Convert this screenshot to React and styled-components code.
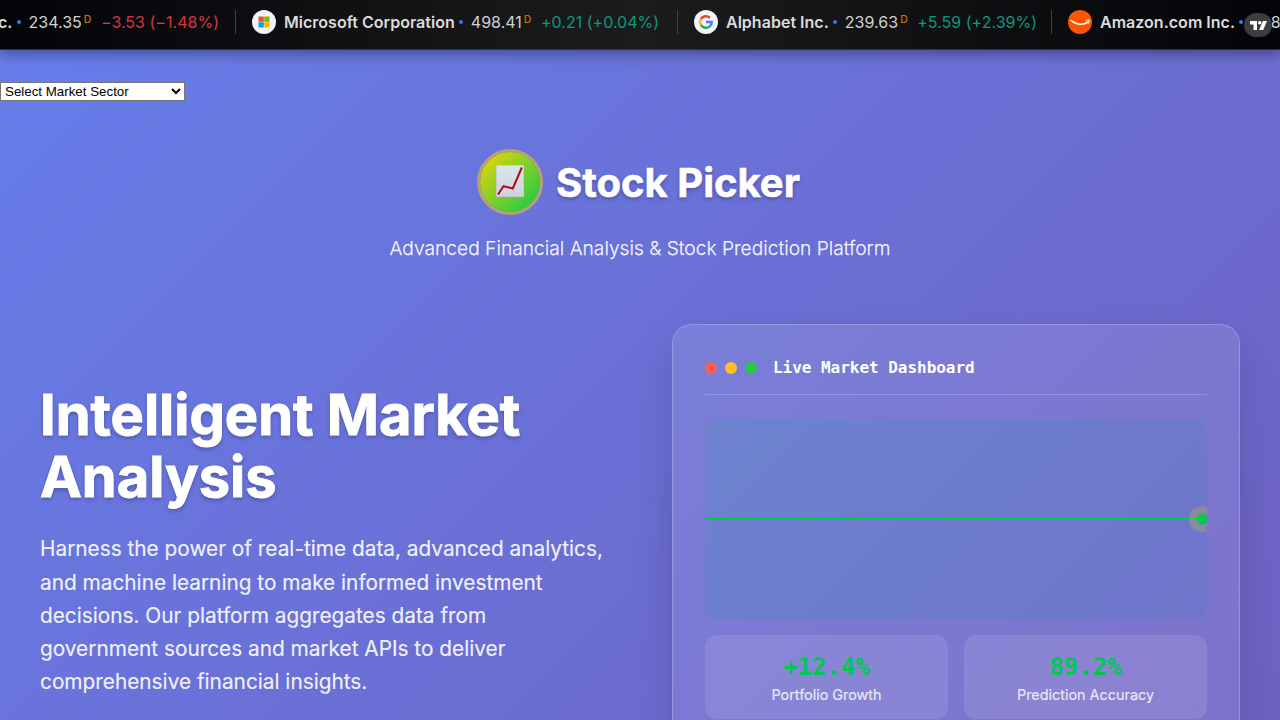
import React from "react";
import styled, { createGlobalStyle } from "styled-components";

const Global = createGlobalStyle`
  *, *::before, *::after { box-sizing: border-box; }
  html, body { margin: 0; padding: 0; }
  body { font-family: Inter, "Liberation Sans", sans-serif; color: #fff; overflow: hidden; }
`;

const Page = styled.div`
  height: 100vh;
  overflow: hidden;
  display: flex;
  flex-direction: column;
  background: linear-gradient(135deg, #667eea 0%, #764ba2 180%);
`;

const TickerBar = styled.div`
  position: relative;
  flex: 0 0 50px;
  display: flex;
  align-items: flex-start;
  background: linear-gradient(90deg, #030408 0%, #1c1c1d 50%, #030408 100%);
  border-bottom: 1px solid #333337;
  box-shadow: 0 4px 12px rgba(0, 0, 0, 0.35);
`;

const TickerTrack = styled.div`
  display: flex;
  width: 100%;
  height: 44px;
  overflow: hidden;
`;

const TickerItem = styled.div`
  position: relative;
  flex: 0 0 ${(p) => p.$width}px;
  min-width: 0;
  display: flex;
  align-items: center;
  justify-content: ${(p) => (p.$end ? "flex-end" : "flex-start")};
  padding: 0 17px 0 ${(p) => (p.$end ? 0 : 16)}px;
  white-space: nowrap;
  font-size: 16px;
  line-height: 24px;
  letter-spacing: 0.02px;
  color: #d1d1d1;
  &::after {
    content: "";
    position: absolute;
    right: 0;
    top: 10px;
    width: 1px;
    height: 24px;
    background: #434346;
  }
`;

const Logo = styled.svg`
  flex: none;
  width: 24px;
  height: 24px;
  margin-right: 8px;
`;

const Name = styled.span`
  font-weight: 600;
  color: #dbdbdb;
`;

const Dot = styled.span`
  flex: none;
  width: 4px;
  height: 4px;
  margin: 0 8px 0 4px;
  border-radius: 50%;
  background: #2e7bf6;
`;

const Delay = styled.span`
  align-self: flex-start;
  margin: 14px 9.5px 0 2px;
  font-size: 10.5px;
  line-height: 12px;
  font-weight: 500;
  color: #c87500;
`;

const Change = styled.span`
  color: ${(p) => (p.$down ? "#dc3340" : "#089981")};
`;

const TvBadge = styled.div`
  position: absolute;
  top: 13px;
  right: 8px;
  width: 28px;
  height: 24px;
  border-radius: 12px;
  background: #3d3d3d;
  display: flex;
  align-items: center;
  justify-content: center;
`;

const Sector = styled.select`
  align-self: flex-start;
  width: 185px;
  height: 19px;
  margin: 32px 0 0;
  padding: 0;
  font: 13.333px "Liberation Sans", Arial, sans-serif;
  color: #000;
  background: #fff;
  border: 1px solid #767676;
  border-radius: 0;
`;

const Header = styled.header`
  display: flex;
  flex-direction: column;
  align-items: center;
  margin-top: 48px;
`;

const Brand = styled.div`
  display: flex;
  align-items: center;
  gap: 13px;
  height: 66px;
  margin-right: 3px;
`;

const BrandMark = styled.div`
  width: 66px;
  height: 66px;
  padding-bottom: 2px;
  border-radius: 50%;
  border: 3px solid #b6a26e;
  background: linear-gradient(135deg, #ffd700 0%, #00c853 100%) border-box;
  background-clip: padding-box;
  display: flex;
  align-items: center;
  justify-content: center;
`;

const BrandName = styled.div`
  padding-top: 1px;
  font-size: 40px;
  line-height: 64px;
  font-weight: 700;
  -webkit-text-stroke: 0.6px #fff;
  text-shadow: 0 2px 4px rgba(0, 0, 0, 0.3);
`;

const Tagline = styled.p`
  margin: 18px 0 0;
  font-size: 19.2px;
  line-height: 31px;
  font-weight: 300;
  color: rgba(255, 255, 255, 0.9);
  -webkit-text-stroke: 0.25px rgba(255, 255, 255, 0.9);
`;

const Hero = styled.main`
  display: grid;
  grid-template-columns: 568px 568px;
  column-gap: 64px;
  align-items: start;
  padding: 0 40px;
  margin-top: 60px;
`;

const Copy = styled.section`
  padding-top: 61px;
`;

const Headline = styled.h1`
  margin: 0;
  font-size: 56px;
  line-height: 61.6px;
  font-weight: 700;
  -webkit-text-stroke: 1px #fff;
  text-shadow: 0 2px 4px rgba(0, 0, 0, 0.3);
`;

const Lead = styled.p`
  margin: 24.15px 0 0;
  font-size: 20.8px;
  line-height: 33.28px;
  color: rgba(255, 255, 255, 0.9);
  -webkit-text-stroke: 0.2px rgba(255, 255, 255, 0.9);
`;

const Card = styled.section`
  height: 460px;
  padding: 32px;
  border: 1px solid rgba(255, 255, 255, 0.2);
  border-radius: 20px;
  background: rgba(255, 255, 255, 0.105);
  box-shadow: 0 20px 40px rgba(0, 0, 0, 0.15);
`;

const CardHead = styled.div`
  display: flex;
  align-items: center;
  gap: 8px;
  height: 38px;
  padding-bottom: 16px;
  border-bottom: 1px solid rgba(255, 255, 255, 0.2);
`;

const Light = styled.span`
  width: 12px;
  height: 12px;
  border-radius: 50%;
  background: ${(p) => p.$color};
`;

const CardTitle = styled.span`
  margin-left: 8px;
  font: bold 16px/22px "DejaVu Sans Mono", "Liberation Mono", monospace;
  letter-spacing: -0.03px;
`;

const Chart = styled.div`
  height: 200px;
  margin-top: 24px;
  border-radius: 12px;
  overflow: hidden;
  background: linear-gradient(135deg, rgba(0, 180, 130, 0.11), rgba(0, 120, 190, 0.12));
`;

const ChartSvg = styled.svg`
  display: block;
  width: 100%;
  height: 100%;
`;

const Metrics = styled.div`
  display: grid;
  grid-template-columns: 1fr 1fr;
  gap: 16px;
  margin-top: 16px;
`;

const Metric = styled.div`
  height: 84px;
  padding-top: 16px;
  border-radius: 12px;
  background: rgba(255, 255, 255, 0.1);
  text-align: center;
`;

const MetricValue = styled.div`
  font: bold 24px/32px "DejaVu Sans Mono", "Liberation Mono", monospace;
  color: #00c853;
`;

const MetricLabel = styled.div`
  font-size: 14.4px;
  line-height: 23px;
  color: rgba(255, 255, 255, 0.8);
  -webkit-text-stroke: 0.2px rgba(255, 255, 255, 0.8);
`;

const MicrosoftLogo = () => (
  <Logo viewBox="0 0 24 24">
    <circle cx="12" cy="12" r="12" fill="#f0f3fa" />
    <path fill="#f25022" d="M6.5 6.5h5.3v5.3H6.5z" />
    <path fill="#7fba00" d="M12.2 6.5h5.3v5.3h-5.3z" />
    <path fill="#00a4ef" d="M6.5 12.2h5.3v5.3H6.5z" />
    <path fill="#ffb900" d="M12.2 12.2h5.3v5.3h-5.3z" />
  </Logo>
);

const GoogleLogo = () => (
  <Logo viewBox="0 0 24 24">
    <circle cx="12" cy="12" r="12" fill="#f0f3fa" />
    <g fill="none" strokeWidth="2.5">
      <path stroke="#ea4335" d="M6.9 9.1A5.8 5.8 0 0 1 16 7.8" />
      <path stroke="#fbbc05" d="M6.9 14.8a5.8 5.8 0 0 1 0-5.7" />
      <path stroke="#34a853" d="M15.8 16.4a5.8 5.8 0 0 1-8.9-1.6" />
      <path stroke="#4285f4" d="M12 12.1h5.7a5.8 5.8 0 0 1-1.9 4.3" />
    </g>
  </Logo>
);

const AmazonLogo = () => (
  <Logo viewBox="0 0 24 24">
    <circle cx="12" cy="12" r="12" fill="#ff5400" />
    <path fill="none" stroke="#fff" strokeWidth="1.5" strokeLinecap="round" d="M3.2 10.5c5 4.7 12.3 4.7 17 1.3" />
    <path
      fill="none"
      stroke="#fff"
      strokeWidth="1.1"
      strokeLinecap="round"
      strokeLinejoin="round"
      d="M17.900 10.300c1.300-.6 2.700-.6 3.100-.2s0 2-.8 3"
    />
  </Logo>
);

const TradingViewMark = () => (
  <svg width="17" height="9" viewBox="0 0 17 9" fill="#fff">
    <path d="M0 0h7v9H3.500V3.500H0z" />
    <circle cx="9.700" cy="1.750" r="1.750" />
    <path d="M12.900 0H17l-3.800 9H9.200z" />
  </svg>
);

const ChartEmoji = () => (
  <svg width="28" height="32" viewBox="0 0 28 32">
    <defs>
      <linearGradient id="paper" x1="0" y1="0" x2="0" y2="1">
        <stop offset="0" stopColor="#d9e7ef" />
        <stop offset="1" stopColor="#ccd2dc" />
      </linearGradient>
    </defs>
    <rect width="28" height="32" fill="url(#paper)" />
    <path d="M.5.500h27v31H.5z" fill="none" stroke="#b7c3c6" strokeOpacity=".6" />
    <path d="M2 29.500l5.500-8.300 9.300 2.300L25.800 2.500" fill="none" stroke="#bd0712" strokeWidth="2" />
  </svg>
);

const quotes = [
  { name: "Apple Inc.", price: "234.35", change: "−3.53 (−1.48%)", down: true, width: 236, end: true },
  { name: "Microsoft Corporation", price: "498.41", change: "+0.21 (+0.04%)", width: 442, logo: MicrosoftLogo },
  { name: "Alphabet Inc.", price: "239.63", change: "+5.59 (+2.39%)", width: 374, logo: GoogleLogo },
  { name: "Amazon.com Inc.", price: "228.15", width: 400, logo: AmazonLogo },
];

const Quote = ({ q }) => (
  <TickerItem $width={q.width} $end={q.end}>
    {q.logo && <q.logo />}
    <Name>{q.name}</Name>
    <Dot />
    <span>{q.price}</span>
    {q.change && <Delay>D</Delay>}
    {q.change && <Change $down={q.down}>{q.change}</Change>}
  </TickerItem>
);

export default function App() {
  return (
    <Page>
      <Global />
      <TickerBar>
        <TickerTrack>
          {quotes.map((q) => (
            <Quote key={q.name} q={q} />
          ))}
        </TickerTrack>
        <TvBadge>
          <TradingViewMark />
        </TvBadge>
      </TickerBar>
      <Sector defaultValue="">
        <option value="">Select Market Sector</option>
      </Sector>
      <Header>
        <Brand>
          <BrandMark>
            <ChartEmoji />
          </BrandMark>
          <BrandName>Stock Picker</BrandName>
        </Brand>
        <Tagline>Advanced Financial Analysis &amp; Stock Prediction Platform</Tagline>
      </Header>
      <Hero>
        <Copy>
          <Headline>Intelligent Market Analysis</Headline>
          <Lead>
            Harness the power of real-time data, advanced analytics, and machine learning to make informed investment
            decisions. Our platform aggregates data from government sources and market APIs to deliver comprehensive
            financial insights.
          </Lead>
        </Copy>
        <Card>
          <CardHead>
            <Light $color="#ff5f57" />
            <Light $color="#ffbd2e" />
            <Light $color="#28ca42" />
            <CardTitle>Live Market Dashboard</CardTitle>
          </CardHead>
          <Chart>
            <ChartSvg viewBox="0 0 502 200">
              <path d="M0 100h497" stroke="#00c853" strokeWidth="2" />
              <circle cx="497" cy="100" r="13" fill="#ffd700" fillOpacity=".2" />
              <circle cx="497" cy="100" r="5.500" fill="#00c853" />
            </ChartSvg>
          </Chart>
          <Metrics>
            <Metric>
              <MetricValue>+12.4%</MetricValue>
              <MetricLabel>Portfolio Growth</MetricLabel>
            </Metric>
            <Metric>
              <MetricValue>89.2%</MetricValue>
              <MetricLabel>Prediction Accuracy</MetricLabel>
            </Metric>
          </Metrics>
        </Card>
      </Hero>
    </Page>
  );
}
